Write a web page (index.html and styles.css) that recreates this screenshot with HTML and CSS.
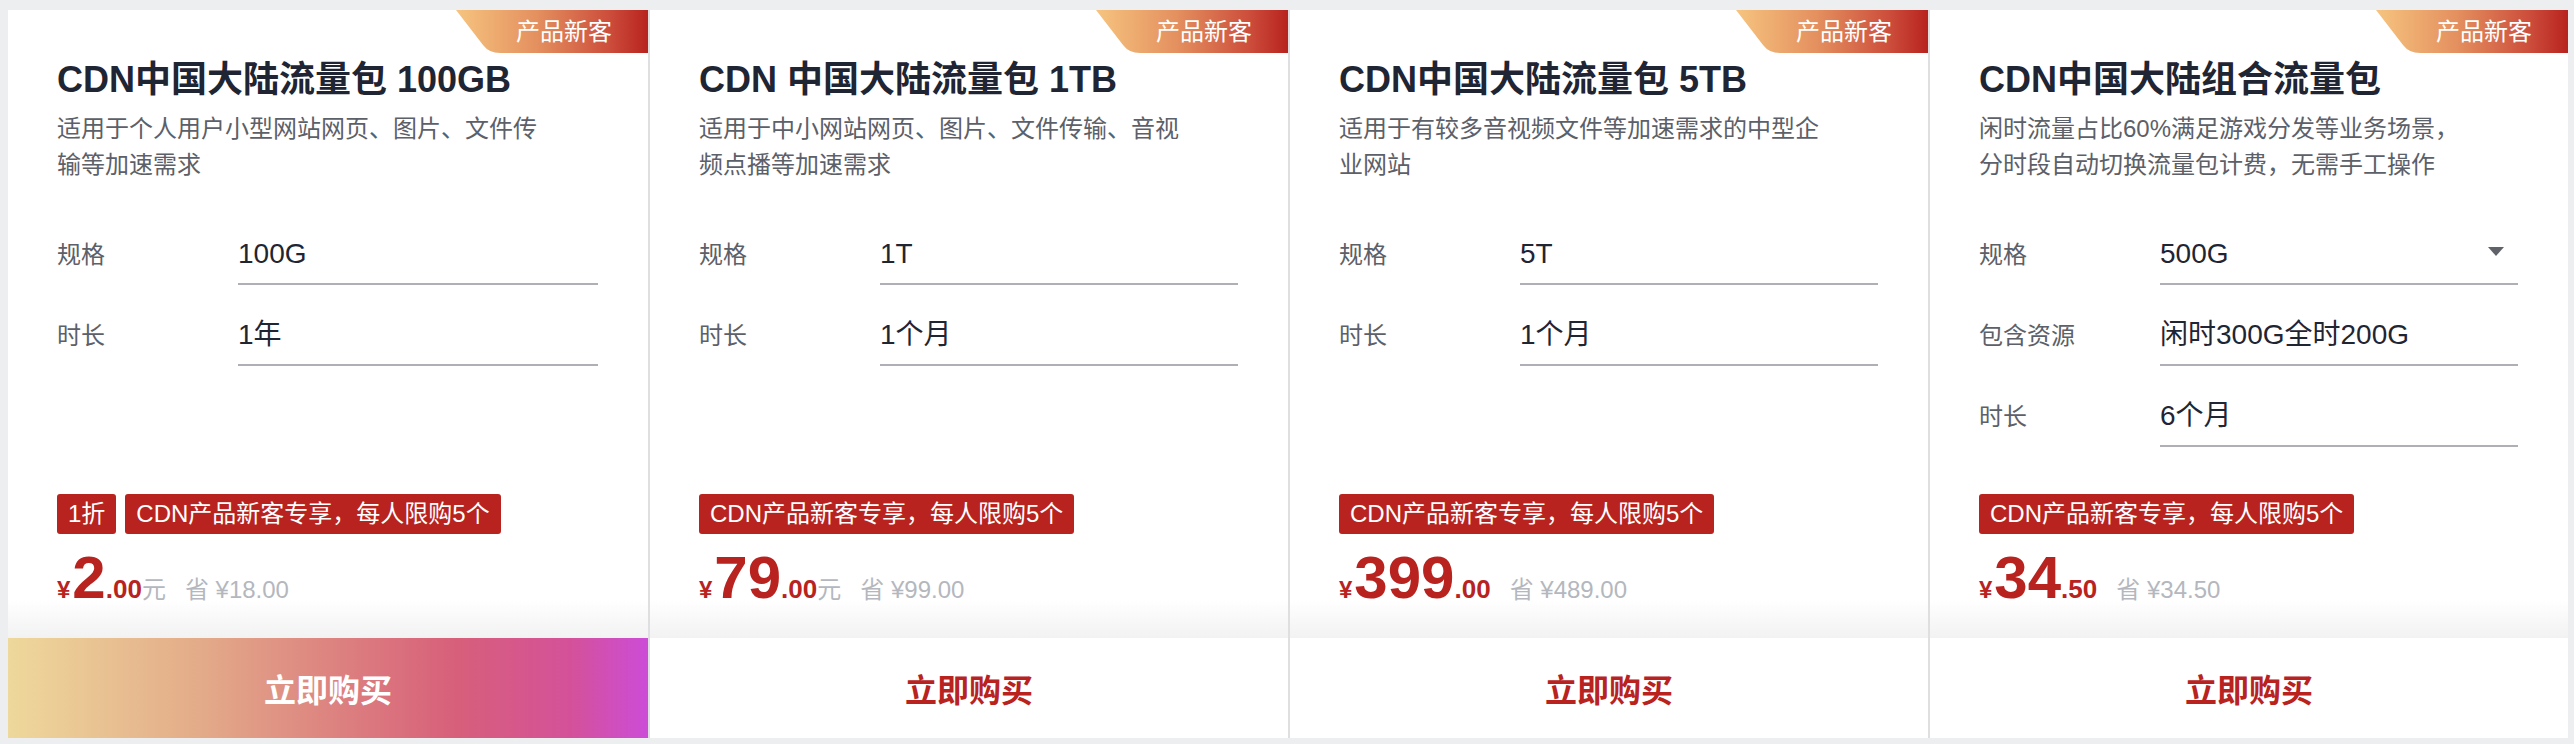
FILE: index.html
```html
<!DOCTYPE html>
<html lang="zh-CN">
<head>
<meta charset="utf-8">
<title>CDN流量包</title>
<link rel="stylesheet" href="styles.css">
</head>
<body>
<div class="wrap">
  <div class="card card-hot">
    <div class="badge">产品新客</div>
    <div class="top">
      <h2 class="title">CDN中国大陆流量包 100GB</h2>
      <p class="desc">适用于个人用户小型网站网页、图片、文件传输等加速需求</p>
      <div class="rows">
        <div class="row"><span class="label">规格</span><span class="field">100G</span></div>
        <div class="row"><span class="label">时长</span><span class="field">1年</span></div>
      </div>
    </div>
    <div class="bottom">
      <div class="tags"><span class="tag">1折</span><span class="tag">CDN产品新客专享，每人限购5个</span></div>
      <div class="price"><span class="yen">¥</span><span class="int">2</span><span class="dec">.00</span><span class="unit">元</span><span class="save">省 ¥18.00</span></div>
    </div>
    <div class="buy">立即购买</div>
  </div>

  <div class="card">
    <div class="badge">产品新客</div>
    <div class="top">
      <h2 class="title">CDN 中国大陆流量包 1TB</h2>
      <p class="desc">适用于中小网站网页、图片、文件传输、音视频点播等加速需求</p>
      <div class="rows">
        <div class="row"><span class="label">规格</span><span class="field">1T</span></div>
        <div class="row"><span class="label">时长</span><span class="field">1个月</span></div>
      </div>
    </div>
    <div class="bottom">
      <div class="tags"><span class="tag">CDN产品新客专享，每人限购5个</span></div>
      <div class="price"><span class="yen">¥</span><span class="int">79</span><span class="dec">.00</span><span class="unit">元</span><span class="save">省 ¥99.00</span></div>
    </div>
    <div class="buy">立即购买</div>
  </div>

  <div class="card">
    <div class="badge">产品新客</div>
    <div class="top">
      <h2 class="title">CDN中国大陆流量包 5TB</h2>
      <p class="desc">适用于有较多音视频文件等加速需求的中型企业网站</p>
      <div class="rows">
        <div class="row"><span class="label">规格</span><span class="field">5T</span></div>
        <div class="row"><span class="label">时长</span><span class="field">1个月</span></div>
      </div>
    </div>
    <div class="bottom">
      <div class="tags"><span class="tag">CDN产品新客专享，每人限购5个</span></div>
      <div class="price"><span class="yen">¥</span><span class="int">399</span><span class="dec">.00</span><span class="save">省 ¥489.00</span></div>
    </div>
    <div class="buy">立即购买</div>
  </div>

  <div class="card">
    <div class="badge">产品新客</div>
    <div class="top">
      <h2 class="title">CDN中国大陆组合流量包</h2>
      <p class="desc">闲时流量占比60%满足游戏分发等业务场景，分时段自动切换流量包计费，无需手工操作</p>
      <div class="rows">
        <div class="row"><span class="label">规格</span><span class="field select"><span>500G</span><i class="caret"></i></span></div>
        <div class="row"><span class="label">包含资源</span><span class="field">闲时300G全时200G</span></div>
        <div class="row"><span class="label">时长</span><span class="field">6个月</span></div>
      </div>
    </div>
    <div class="bottom">
      <div class="tags"><span class="tag">CDN产品新客专享，每人限购5个</span></div>
      <div class="price"><span class="yen">¥</span><span class="int">34</span><span class="dec">.50</span><span class="save">省 ¥34.50</span></div>
    </div>
    <div class="buy">立即购买</div>
  </div>
</div>
</body>
</html>
```

FILE: styles.css
```css
* { box-sizing: border-box; }
html, body { margin: 0; padding: 0; }
body {
  background: #eceef0;
  font-family: "Liberation Sans", "Noto Sans CJK SC", sans-serif;
  color: #1f2533;
}
.wrap {
  display: flex;
  padding: 10px 6px 6px 8px;
}
.card {
  position: relative;
  width: 640px;
  height: 728px;
  background: #fff;
  display: flex;
  flex-direction: column;
}
.card + .card { border-left: 2px solid #dedfe1; }

.badge {
  position: absolute;
  top: 0;
  right: 0;
  width: 192px;
  height: 43px;
  padding-right: 36px;
  text-align: right;
  line-height: 43px;
  font-size: 24px;
  color: #fff;
  background: linear-gradient(90deg, #f6c47f 0%, #e4905f 42%, #cc4d3b 80%, #b8231f 100%);
  clip-path: path('M0 0 H192 V43 H44 Q33 43 27 35 Z');
}

.top { padding: 45px 50px 0 49px; }
.title {
  margin: 0;
  font-size: 36px;
  line-height: 50px;
  font-weight: 700;
  color: #1f2533;
  white-space: nowrap;
}
.desc {
  margin: 6px 0 0;
  max-width: 490px;
  font-size: 24px;
  line-height: 36px;
  color: #5c6068;
}
.rows { margin-top: 52px; }
.row {
  display: flex;
  align-items: baseline;
}
.row + .row { margin-top: 31px; }
.label {
  width: 181px;
  flex: none;
  font-size: 24px;
  color: #5c6068;
}
.field {
  flex: 1;
  font-size: 28px;
  line-height: 36px;
  padding-bottom: 11px;
  border-bottom: 2px solid #aeb0b5;
  color: #1f2533;
}
.field.select {
  display: flex;
  justify-content: space-between;
  align-items: center;
  padding-right: 14px;
}
.caret {
  width: 0;
  height: 0;
  border-left: 8px solid transparent;
  border-right: 8px solid transparent;
  border-top: 9px solid #60626a;
  margin-top: -6px;
}

.bottom {
  margin-top: auto;
  padding: 0 50px 30px 49px;
  background: linear-gradient(180deg, #fff 0, #fff calc(100% - 38px), #f2f2f3 100%);
}
.tags { display: flex; gap: 9px; }
.tag {
  height: 40px;
  line-height: 40px;
  padding: 0 11px;
  background: #b8231f;
  color: #fff;
  font-size: 24px;
  border-radius: 3px;
  white-space: nowrap;
}
.price {
  margin-top: 14px;
  height: 60px;
  line-height: 60px;
  display: flex;
  align-items: baseline;
  white-space: nowrap;
  color: #b8231f;
}
.yen { font-size: 24px; font-weight: 700; margin-right: 2px; }
.int { font-size: 60px; font-weight: 700; }
.dec { font-size: 26px; font-weight: 700; }
.unit { font-size: 24px; color: #b4b7be; }
.save { font-size: 24px; color: #b4b7be; margin-left: 19px; }

.buy {
  height: 100px;
  flex: none;
  display: flex;
  align-items: center;
  justify-content: center;
  font-size: 32px;
  font-weight: 700;
  color: #b8231f;
  background: #fff;
}
.card-hot .buy {
  color: #fff;
  background: linear-gradient(90deg, #eed89b 0%, #e3ab89 30%, #dd8480 50%, #d75f7a 70%, #d4519a 88%, #cc4cd8 100%);
}
```
